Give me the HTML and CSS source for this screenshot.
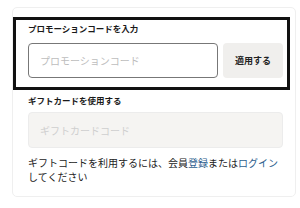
FILE: index.html
```html
<!DOCTYPE html>
<html lang="ja">
<head>
    <meta charset="UTF-8">
    <meta name="viewport" content="width=device-width, initial-scale=1.0">
    <title>プロモーションコード</title>
    <link rel="stylesheet" href="styles.css">
</head>
<body>
    <div class="card">
        <div class="promo">
            <div class="label">プロモーションコードを入力</div>
            <div class="row">
                <input class="code-input" type="text" placeholder="プロモーションコード">
                <button class="apply">適用する</button>
            </div>
        </div>
        <div class="gift">
            <div class="label">ギフトカードを使用する</div>
            <input class="gift-input" type="text" placeholder="ギフトカードコード" disabled>
            <p class="note">ギフトコードを利用するには、会員<a href="#">登録</a>または<a href="#">ログイン</a>してください</p>
        </div>
    </div>
</body>
</html>
```

FILE: styles.css
```css
* {
    margin: 0;
    box-sizing: border-box;
}

body {
    font-family: "Noto Sans CJK JP", "Noto Sans", sans-serif;
    background: white;
    color: #222;
}

.card {
    margin: 7px 4px 0 12px;
    width: 284px;
    height: 190px;
    border: 1px solid #efefef;
    border-radius: 5px;
    padding-top: 9px;
}

.label {
    font-size: 8.5px;
    font-weight: bold;
    line-height: 12px;
    color: #1a1a1a;
}

.promo {
    margin-right: 5px;
    border: 3px solid #111;
    padding: 2px 4px 9px 12px;
}

.row {
    display: flex;
    gap: 5px;
    margin-top: 9px;
}

.code-input {
    width: 190px;
    height: 35px;
    border: 1px solid #777;
    border-radius: 4px;
    padding: 0 11px;
    font-family: inherit;
    font-size: 10px;
    color: #222;
    outline: none;
}

.code-input::placeholder {
    color: #bdbdbd;
}

.apply {
    width: 60px;
    height: 35px;
    border: none;
    border-radius: 4px;
    background: #f0efed;
    font-family: inherit;
    font-size: 9px;
    font-weight: bold;
    color: #222;
}

.gift {
    padding: 4px 12px 0 15px;
}

.gift-input {
    display: block;
    width: 255px;
    height: 36px;
    margin-top: 6px;
    border: 1px solid #ececec;
    border-radius: 4px;
    background: #f5f4f2;
    padding: 0 11px;
    font-family: inherit;
    font-size: 10px;
}

.gift-input::placeholder {
    color: #cfcfcf;
}

.note {
    margin-top: 8px;
    font-size: 10px;
    line-height: 13.5px;
    color: #222;
}

.note a {
    color: #2d5e8e;
    text-decoration: none;
}
```
